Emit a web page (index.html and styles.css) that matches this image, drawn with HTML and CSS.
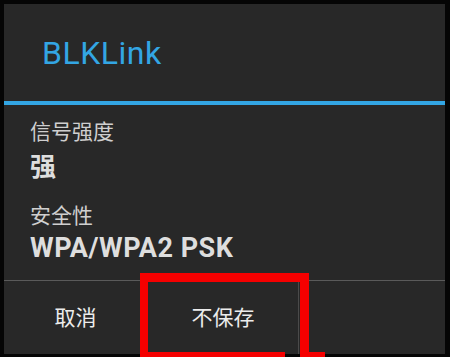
FILE: index.html
```html
<!DOCTYPE html>
<html>
<head>
<meta charset="utf-8">
<link rel="stylesheet" href="styles.css">
</head>
<body>
<div class="screen">
  <div class="dialog">
    <div class="header"><span class="title">BLKLink</span></div>
    <div class="accent"></div>
    <div class="content">
      <div class="label">信号强度</div>
      <div class="value cjk">强</div>
      <div class="label second">安全性</div>
      <div class="value latin">WPA/WPA2 PSK</div>
    </div>
    <div class="buttons">
      <div class="btn">取消</div>
      <div class="btn">不保存</div>
      <div class="btn empty"></div>
    </div>
  </div>
  <div class="mark mark-top"></div>
  <div class="mark mark-left"></div>
  <div class="mark mark-right"></div>
  <div class="mark mark-bottom"></div>
  <div class="mark mark-bottom2"></div>
</div>
</body>
</html>
```
FILE: styles.css
```css
html, body {
  margin: 0;
  padding: 0;
  background: #050505;
}
.screen {
  position: relative;
  width: 450px;
  height: 357px;
  overflow: hidden;
  padding: 4px 5px 3px 4px;
  box-sizing: border-box;
}
.dialog {
  background: #282828;
  height: 350px;
  display: flex;
  flex-direction: column;
}
.header {
  height: 97px;
  display: flex;
  align-items: center;
  padding-left: 38px;
  box-sizing: border-box;
}
.title {
  font-family: Roboto, "Liberation Sans", sans-serif;
  font-size: 32px;
  color: #33a6e4;
  letter-spacing: 0.5px;
}
.accent {
  height: 4px;
  background: #33a6e4;
}
.content {
  padding: 12px 0 0 26px;
  height: 175px;
  box-sizing: border-box;
  display: flex;
  flex-direction: column;
}
.label {
  font-family: "Noto Sans CJK SC", sans-serif;
  font-size: 21px;
  line-height: 26px;
  color: #cfcfcf;
}
.label.second {
  margin-top: 20px;
}
.value {
  color: #dedede;
  font-weight: bold;
}
.value.cjk {
  font-family: "Noto Sans CJK SC", sans-serif;
  font-size: 26px;
  line-height: 32px;
  margin-top: 6px;
}
.value.latin {
  font-family: Roboto, "Liberation Sans", sans-serif;
  font-size: 27px;
  line-height: 34px;
  letter-spacing: 0.5px;
  margin-top: 4px;
}
.buttons {
  flex: 1;
  border-top: 1px solid #5a5a5a;
  display: grid;
  grid-template-columns: 144px 151px 1fr;
}
.btn {
  display: flex;
  align-items: center;
  justify-content: center;
  font-family: "Noto Sans CJK SC", sans-serif;
  font-size: 21px;
  color: #ececec;
  border-right: 1px solid #4a4a4a;
  padding-bottom: 4px;
}
.btn.empty {
  border-right: none;
}
.mark {
  position: absolute;
  background: #f50000;
}
.mark-top { left: 140px; top: 273px; width: 169px; height: 9px; }
.mark-left { left: 140px; top: 273px; width: 8px; height: 84px; }
.mark-right { left: 300px; top: 273px; width: 9px; height: 84px; }
.mark-bottom { left: 140px; top: 352px; width: 145px; height: 5px; }
.mark-bottom2 { left: 300px; top: 352px; width: 25px; height: 5px; }
```
